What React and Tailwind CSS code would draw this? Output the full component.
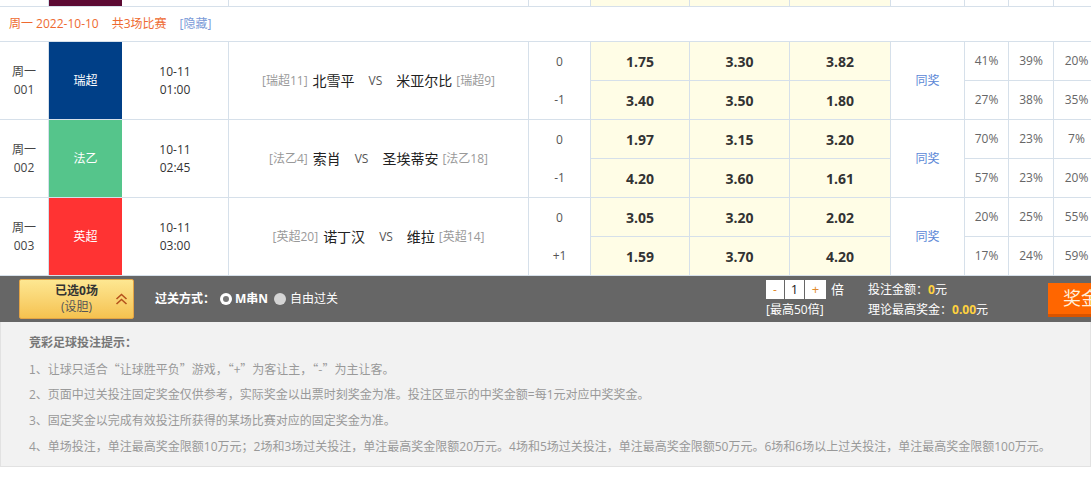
import React from "react";

const line = "border-[#d6e0ea]";

const matches = [
  {
    no: "001",
    league: "瑞超",
    color: "bg-[#003f87]",
    date: "10-11",
    time: "01:00",
    hRank: "[瑞超11]",
    home: "北雪平",
    away: "米亚尔比",
    aRank: "[瑞超9]",
    hc: ["0", "-1"],
    odds: [
      ["1.75", "3.30", "3.82"],
      ["3.40", "3.50", "1.80"],
    ],
    pct: [
      ["41%", "39%", "20%"],
      ["27%", "38%", "35%"],
    ],
  },
  {
    no: "002",
    league: "法乙",
    color: "bg-[#55c58b]",
    date: "10-11",
    time: "02:45",
    hRank: "[法乙4]",
    home: "索肖",
    away: "圣埃蒂安",
    aRank: "[法乙18]",
    hc: ["0", "-1"],
    odds: [
      ["1.97", "3.15", "3.20"],
      ["4.20", "3.60", "1.61"],
    ],
    pct: [
      ["70%", "23%", "7%"],
      ["57%", "23%", "20%"],
    ],
  },
  {
    no: "003",
    league: "英超",
    color: "bg-[#ff3333]",
    date: "10-11",
    time: "03:00",
    hRank: "[英超20]",
    home: "诺丁汉",
    away: "维拉",
    aRank: "[英超14]",
    hc: ["0", "+1"],
    odds: [
      ["3.05", "3.20", "2.02"],
      ["1.59", "3.70", "4.20"],
    ],
    pct: [
      ["20%", "25%", "55%"],
      ["17%", "24%", "59%"],
    ],
  },
];

const oddsW = ["w-[99px]", "w-[100px]", "w-[101px]"];
const pctW = ["w-[44px]", "w-[45px]", "w-[46px]"];

const tips = [
  "2、页面中过关投注固定奖金仅供参考，实际奖金以出票时刻奖金为准。投注区显示的中奖金额=每1元对应中奖奖金。",
  "3、固定奖金以完成有效投注所获得的某场比赛对应的固定奖金为准。",
  "4、单场投注，单注最高奖金限额10万元；2场和3场过关投注，单注最高奖金限额20万元。4场和5场过关投注，单注最高奖金限额50万元。6场和6场以上过关投注，单注最高奖金限额100万元。",
];

const StubRow = () => (
  <div className={`flex w-[1100px] h-[7px] border-b ${line}`}>
    <div className={`w-[49px] shrink-0 border-r ${line}`} />
    <div className="w-[73px] shrink-0 bg-[#5c0a33]" />
    <div className={`w-[107px] shrink-0 border-r ${line}`} />
    <div className={`w-[300px] shrink-0 border-r ${line}`} />
    <div className={`w-[62px] shrink-0 border-r ${line}`} />
    {oddsW.map((w, i) => (
      <div key={i} className={`${w} shrink-0 border-r ${line} bg-[#fffde6]`} />
    ))}
    <div className={`w-[74px] shrink-0 border-r ${line}`} />
    {pctW.map((w, i) => (
      <div key={i} className={`${w} shrink-0 border-r ${line}`} />
    ))}
  </div>
);

const MatchRow = ({ m }) => (
  <div className={`flex w-[1100px] h-[78px] border-b ${line}`}>
    <div
      className={`w-[49px] shrink-0 border-r ${line} flex flex-col items-center justify-center text-[12px] leading-[18px] text-[#444]`}
    >
      <span>周一</span>
      <span>{m.no}</span>
    </div>
    <div
      className={`w-[73px] shrink-0 ${m.color} flex items-center justify-center text-[12px] text-white`}
    >
      {m.league}
    </div>
    <div
      className={`w-[107px] shrink-0 border-r ${line} flex flex-col items-center justify-center text-[12px] leading-[18px] text-[#333]`}
    >
      <span>{m.date}</span>
      <span>{m.time}</span>
    </div>
    <div
      className={`w-[300px] shrink-0 border-r ${line} flex items-center justify-center`}
    >
      <span className="text-[12px] text-[#999]">{m.hRank}</span>
      <span className="ml-[5px] text-[14px] text-[#222]">{m.home}</span>
      <span className="mx-[14px] text-[12px] text-[#555]">VS</span>
      <span className="text-[14px] text-[#222]">{m.away}</span>
      <span className="ml-[4px] text-[12px] text-[#999]">{m.aRank}</span>
    </div>
    <div className={`w-[62px] shrink-0 border-r ${line} flex flex-col`}>
      <div className="h-[39px] flex items-center justify-center text-[12px] text-[#555]">
        {m.hc[0]}
      </div>
      <div className="flex-1 flex items-center justify-center text-[12px] text-[#555]">
        {m.hc[1]}
      </div>
    </div>
    <div className="w-[300px] shrink-0 flex flex-col">
      {m.odds.map((row, r) => (
        <div
          key={r}
          className={`flex ${r === 0 ? `h-[39px] border-b ${line}` : "flex-1"}`}
        >
          {row.map((v, i) => (
            <div
              key={i}
              className={`${oddsW[i]} shrink-0 border-r ${line} bg-[#fffde6] flex items-center justify-center text-[14px] font-bold text-[#333]`}
            >
              {v}
            </div>
          ))}
        </div>
      ))}
    </div>
    <div
      className={`w-[74px] shrink-0 border-r ${line} flex items-center justify-center text-[12px] text-[#5b87d6]`}
    >
      同奖
    </div>
    <div className="w-[135px] shrink-0 flex flex-col">
      {m.pct.map((row, r) => (
        <div
          key={r}
          className={`flex ${r === 0 ? `h-[39px] border-b ${line}` : "flex-1"}`}
        >
          {row.map((v, i) => (
            <div
              key={i}
              className={`${pctW[i]} shrink-0 border-r ${line} flex items-center justify-center text-[12px] text-[#666]`}
            >
              {v}
            </div>
          ))}
        </div>
      ))}
    </div>
  </div>
);

const DoubleUp = () => (
  <svg width="13" height="12" viewBox="0 0 13 12" fill="none" stroke="#b5521c" strokeWidth="1.6">
    <polyline points="1.5,6 6.5,1.5 11.5,6" />
    <polyline points="1.5,11 6.5,6.5 11.5,11" />
  </svg>
);

export default function App() {
  return (
    <div className="w-[1091px] h-[479px] overflow-hidden bg-white font-['Open_Sans','Noto_Sans_CJK_SC',sans-serif]">
      <StubRow />
      <div className={`h-[35px] border-b ${line} flex items-center pl-[9px] text-[12px] text-[#ee6a30]`}>
        <span>周一 2022-10-10</span>
        <span className="ml-[13px]">共3场比赛</span>
        <span className="ml-[13px] text-[#7b9bd8]">[隐藏]</span>
      </div>
      {matches.map((m) => (
        <MatchRow key={m.no} m={m} />
      ))}

      <div className="w-[1128px] h-[46px] bg-[#666] flex items-center">
        <div className="relative ml-[19px] w-[115px] h-[40px] shrink-0 rounded-[2px] border border-[#e3a445] bg-linear-to-b from-[#fde791] to-[#f5c24f] flex flex-col items-center justify-center leading-[16px] text-[12px]">
          <span className="font-bold text-[#333]">已选0场</span>
          <span className="text-[#555]">(设胆)</span>
          <span className="absolute right-[5px] top-[13px]">
            <DoubleUp />
          </span>
        </div>
        <span className="ml-[21px] text-[12px] font-bold text-white">过关方式：</span>
        <span className="ml-[5px] w-[12px] h-[12px] rounded-full bg-white flex items-center justify-center">
          <span className="w-[6px] h-[6px] rounded-full bg-[#777]" />
        </span>
        <span className="ml-[3px] text-[12px] font-bold text-white">M串N</span>
        <span className="ml-[6px] w-[12px] h-[12px] rounded-full bg-[#d4d4d4]" />
        <span className="ml-[4px] text-[12px] text-white">自由过关</span>
        <div className="flex-1" />
        <div className="w-[102px] shrink-0 self-start mt-[4px] flex flex-col">
          <div className="flex items-center h-[19px]">
            <span className="w-[18px] h-[19px] bg-white text-[#e0892c] text-[12px] leading-[19px] text-center">-</span>
            <span className="ml-[1px] w-[19px] h-[19px] bg-white text-[#222] text-[13px] leading-[19px] text-center">1</span>
            <span className="ml-[1px] w-[21px] h-[19px] bg-white text-[#e0892c] text-[13px] leading-[19px] text-center">+</span>
            <span className="ml-[5px] text-[13px] text-white">倍</span>
          </div>
          <span className="mt-[2px] text-[12px] leading-[18px] text-white">[最高50倍]</span>
        </div>
        <div className="w-[180px] shrink-0 self-start mt-[4px] flex flex-col text-[12px] leading-[20px] text-white">
          <span>
            投注金额：<b className="text-[#ffd23f]">0</b>元
          </span>
          <span>
            理论最高奖金：<b className="text-[#ffd23f]">0.00</b>元
          </span>
        </div>
        <div className="w-[80px] h-[34px] shrink-0 self-start mt-[7px] bg-[#ff6600] border-b-[3px] border-[#d95400] pl-[15px] whitespace-nowrap text-[18px] leading-[31px] text-[#fff0dc]">
          奖金优化
        </div>
      </div>

      <div className="w-[1091px] bg-[#f2f2f2] border border-t-0 border-[#e2e2e2] pt-[8px] pb-[6px] pl-[28px] text-[12px] leading-[26px] text-[#999]">
        <div className="font-bold text-[#777]">竞彩足球投注提示：</div>
        <div className="whitespace-nowrap font-['Noto_Sans_CJK_SC',sans-serif]">
          1、让球只适合“让球胜平负”游戏，“+”为客让主，“-”为主让客。
        </div>
        {tips.map((t, i) => (
          <div key={i} className="whitespace-nowrap">
            {t}
          </div>
        ))}
      </div>
    </div>
  );
}
